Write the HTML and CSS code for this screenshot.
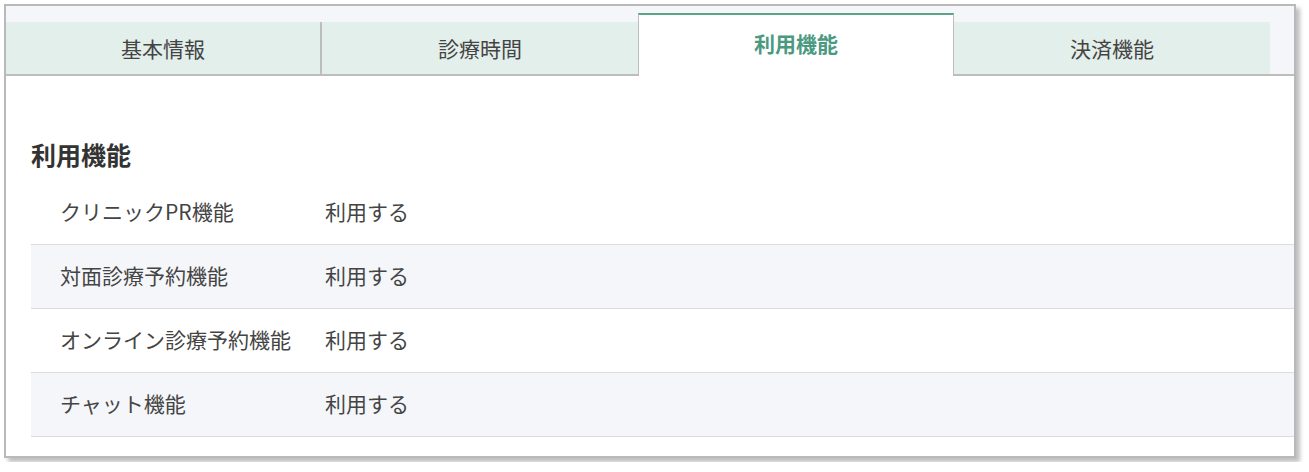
FILE: index.html
```html
<!DOCTYPE html>
<html lang="ja">
<head>
<meta charset="UTF-8">
<meta name="viewport" content="width=device-width, initial-scale=1.0">
<title>利用機能</title>
<link rel="stylesheet" href="styles.css">
</head>
<body>

<div class="frame">
  <!-- タブ -->
  <div class="tabs">
    <div class="tab">基本情報</div>
    <div class="tab">診療時間</div>
    <div class="tab active">利用機能</div>
    <div class="tab">決済機能</div>
  </div>

  <div class="content">
    <h2>利用機能</h2>
    <div class="rows">
      <div class="row">
        <div class="label">クリニックPR機能</div>
        <div class="value">利用する</div>
      </div>
      <div class="row">
        <div class="label">対面診療予約機能</div>
        <div class="value">利用する</div>
      </div>
      <div class="row">
        <div class="label">オンライン診療予約機能</div>
        <div class="value">利用する</div>
      </div>
      <div class="row">
        <div class="label">チャット機能</div>
        <div class="value">利用する</div>
      </div>
    </div>
  </div>
</div>

</body>
</html>
```

FILE: styles.css
```css
body {
    font-family: "Noto Sans CJK JP", "Noto Sans", sans-serif;
    background-color: #ffffff;
    color: #444;
    margin: 0;
    padding: 4px;
}

.frame {
    width: 1292px;
    box-sizing: border-box;
    border: 2px solid #b9b9b9;
    box-shadow: 4px 4px 4px rgba(0, 0, 0, 0.25);
    background-color: #fff;
}

/* タブ */
.tabs {
    display: flex;
    align-items: flex-end;
    height: 68px;
    padding-right: 24px;
    background-color: #f5f6fa;
    border-bottom: 2px solid #bdbdbd;
}

.tab {
    flex: 0 0 316px;
    box-sizing: border-box;
    height: 52px;
    display: flex;
    justify-content: center;
    align-items: center;
    background-color: #e3efeb;
    font-size: 21px;
    color: #444;
}

.tab:first-child {
    border-right: 2px solid #bdbdbd;
}

.tab.active {
    height: 63px;
    margin-bottom: -2px;
    padding-bottom: 6px;
    background-color: #fff;
    border-top: 2px solid #5aa48b;
    border-left: 1px solid #bdbdbd;
    border-right: 1px solid #bdbdbd;
    color: #4b9a80;
    font-weight: bold;
}

.content {
    padding: 60px 0 19px 25px;
}

h2 {
    margin: 0 0 9px;
    font-size: 25px;
    line-height: 36px;
    font-weight: bold;
    color: #333;
}

.row {
    display: flex;
    align-items: center;
    height: 64px;
    box-sizing: border-box;
    padding-left: 29px;
    padding-bottom: 3px;
    border-bottom: 1px solid #dcdcdc;
    font-size: 21px;
}

.row:nth-child(even) {
    background-color: #f5f6fa;
}

.label {
    width: 265px;
}
```
